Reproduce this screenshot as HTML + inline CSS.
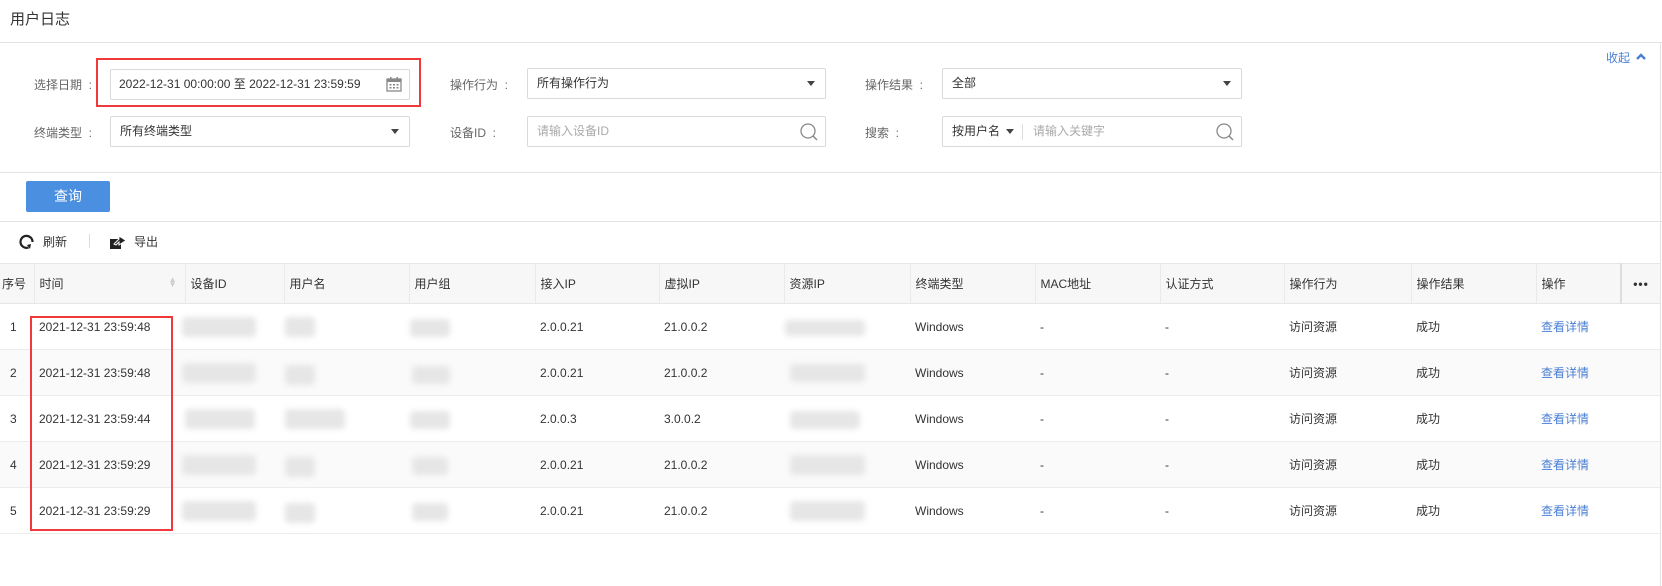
<!DOCTYPE html>
<html><head><meta charset="utf-8"><style>
*{margin:0;padding:0;box-sizing:border-box}
body{width:1662px;height:586px;background:#fff;font-family:"Liberation Sans","Noto Sans CJK SC",sans-serif;font-size:12px;color:#333;position:relative;overflow:hidden}
.a{position:absolute}
.hl{position:absolute;left:0;width:1662px;height:1px;background:#e3e3e3}
.lbl{position:absolute;color:#666;font-size:12px;line-height:16px;white-space:pre}
.inp{position:absolute;height:31px;border:1px solid #d9d9d9;border-radius:2px;background:#fff;line-height:29px;padding-left:9px;font-size:12px}
.tri{position:absolute;right:10px;top:12px;width:0;height:0;border-left:4px solid transparent;border-right:4px solid transparent;border-top:5px solid #444}
.ph{color:#aaa}
.blur{position:absolute;background:#e6e6e6;filter:blur(3px);border-radius:4px}
table{position:absolute;left:0;top:263px;border-collapse:collapse;table-layout:fixed;width:1660px}
th{height:40px;background:#f7f7f7;font-weight:normal;text-align:left;padding-left:5px;border-top:1px solid #e6e6e6;border-bottom:1px solid #e6e6e6;border-left:1px solid #eaeaea;font-size:12px}
td{height:46px;padding-left:5px;border-bottom:1px solid #ececec;font-size:12px;position:relative}
tr.g td{background:#fafafa}
.lnk{color:#4a7fd4}
</style></head><body>
<div class="a" style="left:10px;top:10px;font-size:15px;line-height:20px;color:#333">用户日志</div>
<div class="hl" style="top:42px"></div>
<div class="a" style="left:1660px;top:42px;width:1px;height:544px;background:#e3e3e3"></div>
<div class="a lnk" style="left:1606px;top:50px;font-size:12px;line-height:16px">收起</div>
<svg class="a" style="left:1635px;top:52px" width="12" height="10" viewBox="0 0 12 10"><path d="M2 7 L6 3 L10 7" stroke="#4a7fd4" stroke-width="2.4" fill="none"/></svg>

<div class="lbl" style="left:34px;top:77px">选择日期  :</div>
<div class="inp" style="left:110px;top:69px;width:300px;color:#333;font-size:12px;padding-left:8px">2022-12-31 00:00:00 至 2022-12-31 23:59:59
<svg class="a" style="right:7px;top:7px" width="16" height="15" viewBox="0 0 16 15"><rect x="1" y="2" width="14" height="12" fill="none" stroke="#888" stroke-width="1.3"/><rect x="1" y="2" width="14" height="3" fill="#888"/><rect x="4" y="0" width="1.5" height="3" fill="#888"/><rect x="10.5" y="0" width="1.5" height="3" fill="#888"/><g fill="#888"><rect x="3.5" y="7" width="2" height="1.5"/><rect x="7" y="7" width="2" height="1.5"/><rect x="10.5" y="7" width="2" height="1.5"/><rect x="3.5" y="10" width="2" height="1.5"/><rect x="7" y="10" width="2" height="1.5"/><rect x="10.5" y="10" width="2" height="1.5"/></g></svg></div>
<div class="a" style="left:96px;top:58px;width:325px;height:49px;border:2px solid #f0393a"></div>

<div class="lbl" style="left:450px;top:77px">操作行为  :</div>
<div class="inp" style="left:527px;top:68px;width:299px">所有操作行为<span class="tri"></span></div>
<div class="lbl" style="left:865px;top:77px">操作结果  :</div>
<div class="inp" style="left:942px;top:68px;width:300px">全部<span class="tri"></span></div>

<div class="lbl" style="left:34px;top:125px">终端类型  :</div>
<div class="inp" style="left:110px;top:116px;width:300px">所有终端类型<span class="tri"></span></div>
<div class="lbl" style="left:450px;top:125px">设备ID  :</div>
<div class="inp ph" style="left:527px;top:116px;width:299px">请输入设备ID
<svg class="a" style="right:6px;top:5px" width="20" height="20" viewBox="0 0 20 20"><circle cx="9" cy="9" r="7" fill="none" stroke="#888" stroke-width="1.3"/><path d="M14 14 L18 18" stroke="#888" stroke-width="1.5"/></svg></div>
<div class="lbl" style="left:865px;top:125px">搜索  :</div>
<div class="inp" style="left:942px;top:116px;width:300px;padding-left:9px">按用户名<span style="display:inline-block;margin-left:6px;vertical-align:middle;border-left:4px solid transparent;border-right:4px solid transparent;border-top:5px solid #444"></span><span style="display:inline-block;width:1px;height:16px;background:#ddd;margin:0 10px 0 8px;vertical-align:middle"></span><span class="ph">请输入关键字</span>
<svg class="a" style="right:6px;top:5px" width="20" height="20" viewBox="0 0 20 20"><circle cx="9" cy="9" r="7" fill="none" stroke="#888" stroke-width="1.3"/><path d="M14 14 L18 18" stroke="#888" stroke-width="1.5"/></svg></div>

<div class="hl" style="top:172px"></div>
<div class="a" style="left:26px;top:181px;width:84px;height:31px;background:#4a8fe0;border-radius:2px;color:#fff;text-align:center;line-height:31px;font-size:14px">查询</div>
<div class="hl" style="top:221px"></div>

<svg class="a" style="left:19px;top:234px" width="16" height="16" viewBox="0 0 16 16"><path d="M9.5 13.5 A6 6 0 1 1 13.5 8" fill="none" stroke="#222" stroke-width="2.2"/><path d="M8 11 L11 15 L12 10 Z" fill="#222"/></svg>
<div class="a" style="left:43px;top:234px;line-height:16px">刷新</div>
<div class="a" style="left:89px;top:234px;width:1px;height:14px;background:#ddd"></div>
<svg class="a" style="left:109px;top:233px" width="18" height="17" viewBox="0 0 18 17"><rect x="1" y="6" width="11" height="10" fill="#222"/><path d="M5 11 L10 6 L10 3 L17 7.5 L10 12 L10 9 L7 12 Z" fill="#222" stroke="#fff" stroke-width="1"/></svg>
<div class="a" style="left:134px;top:234px;line-height:16px">导出</div>

<table>
<colgroup><col style="width:34px"><col style="width:151px"><col style="width:99px"><col style="width:125px"><col style="width:126px"><col style="width:124px"><col style="width:125px"><col style="width:126px"><col style="width:125px"><col style="width:125px"><col style="width:124px"><col style="width:127px"><col style="width:125px"><col style="width:85px"><col style="width:39px"></colgroup>
<tr><th style="padding-left:2px;border-left:none">序号</th><th>时间<span style="float:right;margin-right:8px;color:#ccc;font-size:8px;line-height:5px;margin-top:2px">▲<br>▼</span></th><th>设备ID</th><th>用户名</th><th>用户组</th><th>接入IP</th><th>虚拟IP</th><th>资源IP</th><th>终端类型</th><th>MAC地址</th><th>认证方式</th><th>操作行为</th><th>操作结果</th><th>操作</th><th style="border-left:2px solid #ddd;text-align:center;padding-left:0;font-weight:bold;letter-spacing:1px">•••</th></tr>
<tr><td style="padding-left:10px">1</td><td>2021-12-31 23:59:48</td><td></td><td></td><td></td><td>2.0.0.21</td><td>21.0.0.2</td><td></td><td>Windows</td><td>-</td><td>-</td><td>访问资源</td><td>成功</td><td class="lnk">查看详情</td><td></td></tr>
<tr class="g"><td style="padding-left:10px">2</td><td>2021-12-31 23:59:48</td><td></td><td></td><td></td><td>2.0.0.21</td><td>21.0.0.2</td><td></td><td>Windows</td><td>-</td><td>-</td><td>访问资源</td><td>成功</td><td class="lnk">查看详情</td><td></td></tr>
<tr><td style="padding-left:10px">3</td><td>2021-12-31 23:59:44</td><td></td><td></td><td></td><td>2.0.0.3</td><td>3.0.0.2</td><td></td><td>Windows</td><td>-</td><td>-</td><td>访问资源</td><td>成功</td><td class="lnk">查看详情</td><td></td></tr>
<tr class="g"><td style="padding-left:10px">4</td><td>2021-12-31 23:59:29</td><td></td><td></td><td></td><td>2.0.0.21</td><td>21.0.0.2</td><td></td><td>Windows</td><td>-</td><td>-</td><td>访问资源</td><td>成功</td><td class="lnk">查看详情</td><td></td></tr>
<tr><td style="padding-left:10px">5</td><td>2021-12-31 23:59:29</td><td></td><td></td><td></td><td>2.0.0.21</td><td>21.0.0.2</td><td></td><td>Windows</td><td>-</td><td>-</td><td>访问资源</td><td>成功</td><td class="lnk">查看详情</td><td></td></tr>
</table>

<div class="blur" style="left:182px;top:317px;width:74px;height:20px"></div>
<div class="blur" style="left:285px;top:317px;width:30px;height:20px"></div>
<div class="blur" style="left:410px;top:319px;width:40px;height:18px"></div>
<div class="blur" style="left:785px;top:320px;width:80px;height:16px"></div>
<div class="blur" style="left:182px;top:363px;width:74px;height:20px"></div>
<div class="blur" style="left:285px;top:365px;width:30px;height:20px"></div>
<div class="blur" style="left:412px;top:366px;width:38px;height:18px"></div>
<div class="blur" style="left:790px;top:364px;width:75px;height:18px"></div>
<div class="blur" style="left:185px;top:409px;width:70px;height:20px"></div>
<div class="blur" style="left:285px;top:409px;width:60px;height:20px"></div>
<div class="blur" style="left:410px;top:411px;width:40px;height:18px"></div>
<div class="blur" style="left:790px;top:411px;width:70px;height:18px"></div>
<div class="blur" style="left:182px;top:455px;width:74px;height:20px"></div>
<div class="blur" style="left:285px;top:457px;width:30px;height:20px"></div>
<div class="blur" style="left:412px;top:457px;width:36px;height:18px"></div>
<div class="blur" style="left:790px;top:455px;width:75px;height:20px"></div>
<div class="blur" style="left:182px;top:501px;width:74px;height:20px"></div>
<div class="blur" style="left:285px;top:503px;width:30px;height:20px"></div>
<div class="blur" style="left:412px;top:503px;width:36px;height:18px"></div>
<div class="blur" style="left:790px;top:501px;width:75px;height:20px"></div>

<div class="a" style="left:30px;top:316px;width:143px;height:215px;border:2px solid #f0393a"></div>
</body></html>
